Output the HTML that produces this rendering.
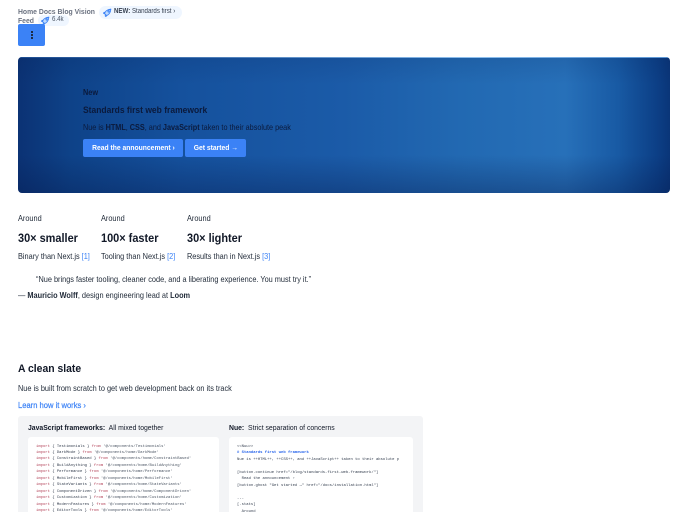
<!DOCTYPE html>
<html lang="en">
<head>
<meta charset="utf-8">
<title>Nue</title>
<style>
html,body{margin:0;padding:0;background:#fff}
body{width:688px;height:512px;overflow:hidden;position:relative;font-family:"Liberation Sans",sans-serif;color:#111827}
.a{position:absolute;white-space:nowrap;line-height:1;transform:scaleX(.89);transform-origin:0 50%}
svg.a,.code,.nt{transform:none}
.nav{color:#6b7280;font-size:7.6px;font-weight:700;transform:scaleX(.9)}
.pill{position:absolute;background:#eff6ff;border-radius:9px}
.btn{position:absolute;background:#3b82f6;color:#fff;border-radius:2px;font-size:7.6px;font-weight:700;line-height:1;display:flex;align-items:center;justify-content:center;white-space:nowrap}
.btn span{display:inline-block;transform:scaleX(.89)}
.hero{position:absolute;left:18px;top:57px;width:652px;height:136px;border-radius:4px;overflow:hidden;background:linear-gradient(90deg,#0b3274 0%,#0e4288 8%,#15519d 25%,#1b5ba8 50%,#2269b2 68%,#2770b9 84%,#185aa4 92%,#0c3f86 98%,#0a3578 100%)}
.hero:before{content:"";position:absolute;inset:0;background:linear-gradient(180deg,rgba(5,25,75,.12) 0%,rgba(5,25,75,0) 20%,rgba(5,25,75,0) 72%,rgba(5,25,75,.34) 100%)}
.hero:after{content:"";position:absolute;left:0;right:0;top:0;height:1px;background:linear-gradient(90deg,#1c4c90,#8fc0ee 70%,#5b96d4)}
.t{font-size:8.26px;color:#1f2937}
.b{font-weight:700}
.h3{font-size:11.9px;font-weight:700;color:#111827;transform:scaleX(.92)}
.l{color:#3b82f6}
.panel{position:absolute;left:18px;top:416px;width:405px;height:96px;background:#f3f4f6;border-radius:3px 3px 0 0}
.card{position:absolute;top:437px;height:75px;background:#fff;border-radius:3px 3px 0 0}
.code{position:absolute;font-family:"Liberation Mono",monospace;font-size:3.87px;line-height:6.47px;white-space:pre;color:#374151}
.r{color:#b4445a}.g{color:#4b5563}.bl{color:#2563eb;font-weight:700}
</style>
</head>
<body>
<div class="a nav" style="left:18px;top:8px">Home Docs Blog Vision</div>
<div class="pill" style="left:99px;top:6px;width:83px;height:13px"></div>
<svg class="a" style="left:103px;top:8px" width="9" height="9" viewBox="0 0 24 24" fill="#bfdbfe" stroke="#3b82f6" stroke-width="2.4" stroke-linejoin="round"><path d="M4 15c1-5 6-11 17-12-1 11-7 16-12 17z M9 20l-1 3-3-3M4 15l-3-1 3-3"/><circle cx="15" cy="9" r="2"/></svg>
<div class="a" style="left:114px;top:8.7px;font-size:6.9px;color:#374151"><span class="b">NEW:</span> Standards first ›</div>

<div class="a nav" style="left:18px;top:17px">Feed</div>
<div class="pill" style="left:38px;top:15px;width:31px;height:11px"></div>
<svg class="a" style="left:41px;top:16px" width="9" height="9" viewBox="0 0 24 24" fill="#bfdbfe" stroke="#3b82f6" stroke-width="2.4" stroke-linejoin="round"><path d="M4 15c1-5 6-11 17-12-1 11-7 16-12 17z M9 20l-1 3-3-3M4 15l-3-1 3-3"/><circle cx="15" cy="9" r="2"/></svg>
<div class="a" style="left:52px;top:17.2px;font-size:6.9px;color:#4b5563">6.4k</div>

<div class="btn" style="left:18px;top:24px;width:27px;height:22px"></div>
<div class="a nt" style="left:30.5px;top:31px;width:2px;height:2px;border-radius:50%;background:#111;box-shadow:0 3px 0 #111,0 6px 0 #111"></div>

<div class="hero"></div>
<div class="a b" style="left:83px;top:89.2px;font-size:8.2px;color:#0b1a3c">New</div>
<div class="a b" style="left:83px;top:106px;font-size:9.55px;color:#0b1a3c">Standards first web framework</div>
<div class="a" style="left:83px;top:123.9px;font-size:8.17px;color:#0b1a3c">Nue is <span class="b">HTML</span>, <span class="b">CSS</span>, and <span class="b">JavaScript</span> taken to their absolute peak</div>
<div class="btn" style="left:83px;top:139px;width:100px;height:18px"><span>Read the announcement ›</span></div>
<div class="btn" style="left:185px;top:139px;width:61px;height:18px"><span>Get started →</span></div>

<div class="a t" style="left:18px;top:214.5px">Around</div>
<div class="a t" style="left:100.5px;top:214.5px">Around</div>
<div class="a t" style="left:187px;top:214.5px">Around</div>
<div class="a h3" style="left:18px;top:232.5px">30× smaller</div>
<div class="a h3" style="left:100.5px;top:232.5px">100× faster</div>
<div class="a h3" style="left:187px;top:232.5px">30× lighter</div>
<div class="a t" style="left:18px;top:253.2px">Binary than Next.js <span class="l">[1]</span></div>
<div class="a t" style="left:100.5px;top:253.2px">Tooling than Next.js <span class="l">[2]</span></div>
<div class="a t" style="left:187px;top:253.2px">Results than in Next.js <span class="l">[3]</span></div>

<div class="a t" style="left:36px;top:276.2px">“Nue brings faster tooling, cleaner code, and a liberating experience. You must try it.”</div>
<div class="a t" style="left:18px;top:291.8px">— <span class="b">Mauricio Wolff</span>, design engineering lead at <span class="b">Loom</span></div>

<div class="a" style="left:18px;top:364.3px;font-size:11.3px;font-weight:700;transform:scaleX(.92)">A clean slate</div>
<div class="a t" style="left:18px;top:385.2px">Nue is built from scratch to get web development back on its track</div>
<div class="a l" style="left:18px;top:400.8px;font-size:8.54px;-webkit-text-stroke:.2px #3b82f6">Learn how it works ›</div>

<div class="panel"></div>
<div class="a" style="left:28px;top:423.8px;font-size:7.7px;color:#111827"><span class="b">JavaScript frameworks:</span>&nbsp; All mixed together</div>
<div class="a" style="left:229px;top:423.8px;font-size:7.7px;color:#111827"><span class="b">Nue:</span>&nbsp; Strict separation of concerns</div>
<div class="card" style="left:28px;width:191px"></div>
<div class="card" style="left:229px;width:184px"></div>

<div class="code" style="left:36px;top:443.5px"><span class="r">import</span> { Testimonials } <span class="r">from</span> <span class="g">'@/components/Testimonials'</span>
<span class="r">import</span> { DarkMode } <span class="r">from</span> <span class="g">'@/components/home/DarkMode'</span>
<span class="r">import</span> { ConstraintBased } <span class="r">from</span> <span class="g">'@/components/home/ConstraintBased'</span>
<span class="r">import</span> { BuildAnything } <span class="r">from</span> <span class="g">'@/components/home/BuildAnything'</span>
<span class="r">import</span> { Performance } <span class="r">from</span> <span class="g">'@/components/home/Performance'</span>
<span class="r">import</span> { MobileFirst } <span class="r">from</span> <span class="g">'@/components/home/MobileFirst'</span>
<span class="r">import</span> { StateVariants } <span class="r">from</span> <span class="g">'@/components/home/StateVariants'</span>
<span class="r">import</span> { ComponentDriven } <span class="r">from</span> <span class="g">'@/components/home/ComponentDriven'</span>
<span class="r">import</span> { Customization } <span class="r">from</span> <span class="g">'@/components/home/Customization'</span>
<span class="r">import</span> { ModernFeatures } <span class="r">from</span> <span class="g">'@/components/home/ModernFeatures'</span>
<span class="r">import</span> { EditorTools } <span class="r">from</span> <span class="g">'@/components/home/EditorTools'</span></div>

<div class="code" style="left:237px;top:444px">&lt;&lt;Nuu&gt;&gt;
<span class="bl"># Standards first web framework</span>
Nue is ++HTML++, ++CSS++, and ++JavaScript++ taken to their absolute p

[button.continue href="/blog/standards-first-web-framework/"]
  Read the announcement ›
[button.ghost "Get started →" href="/docs/installation.html"]

---
[.stats]
  Around</div>
</body>
</html>
